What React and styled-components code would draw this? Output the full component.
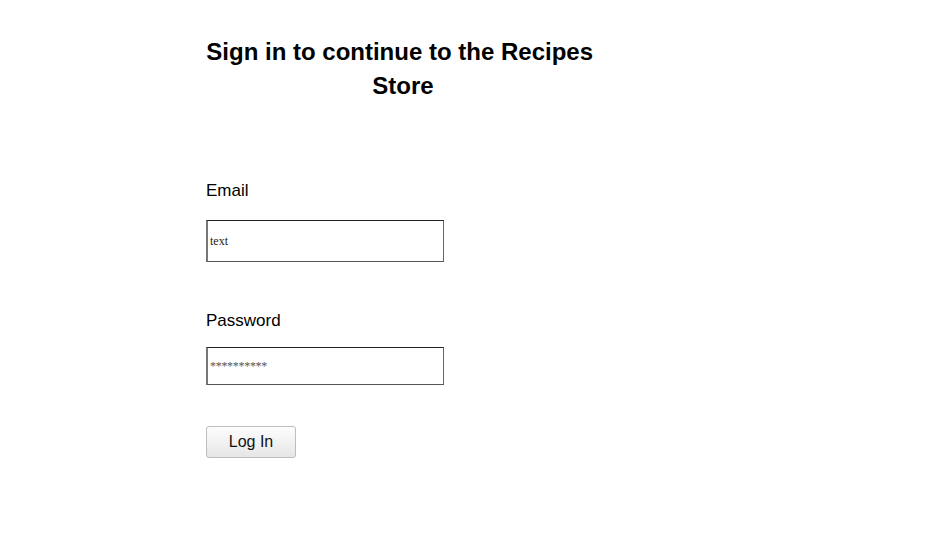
import styled, {createGlobalStyle} from "styled-components";

const GlobalStyle = createGlobalStyle`
  body {
    margin: 0;
    background: #fff;
    font-family: "Liberation Sans", Arial, sans-serif;
    color: #000;
  }
`;

const Page = styled.div`
  padding: 35px 0 0 206px;
  display: flex;
  flex-direction: column;
  align-items: flex-start;
`;

const Title = styled.h1`
  width: 394px;
  margin: 0;
  font-size: 24px;
  line-height: 34px;
  font-weight: 700;
  text-align: center;
`;

const Label = styled.label`
  display: block;
  font-size: 17px;
  line-height: 20px;
  margin-top: ${(props) => props.top}px;
`;

const SketchBox = styled.div`
  width: 238px;
  height: ${(props) => props.height}px;
  margin-top: ${(props) => props.top}px;
  box-sizing: border-box;
  border-top: 1px solid #222;
  border-bottom: 1px solid #555;
  border-left: 2px solid #777;
  border-right: 1px solid #666;
  display: flex;
  align-items: center;
  padding-left: 2px;
  font-family: "Liberation Serif", "Times New Roman", serif;
  font-size: 12px;
  color: #222;
`;

const Value = styled.span`
  color: ${(props) => (props.masked ? "#555" : "#222")};
  letter-spacing: ${(props) => (props.masked ? "-0.3px" : "0")};
`;

const Button = styled.button`
  margin-top: 41px;
  width: 90px;
  height: 32px;
  border: 1px solid #bdbdbd;
  border-radius: 3px;
  background: linear-gradient(#fdfdfd, #e6e6e6);
  font-family: "Liberation Sans", Arial, sans-serif;
  font-size: 16px;
  color: #111;
  cursor: pointer;
`;

export default function App() {
  return (
    <>
      <GlobalStyle />
      <Page>
        <Title>Sign in to continue to the Recipes{"\u00a0"} Store</Title>
        <Label top={78}>Email</Label>
        <SketchBox top={19} height={42}>
          <Value>text</Value>
        </SketchBox>
        <Label top={49}>Password</Label>
        <SketchBox top={16} height={38}>
          <Value masked>**********</Value>
        </SketchBox>
        <Button>Log In</Button>
      </Page>
    </>
  );
}
